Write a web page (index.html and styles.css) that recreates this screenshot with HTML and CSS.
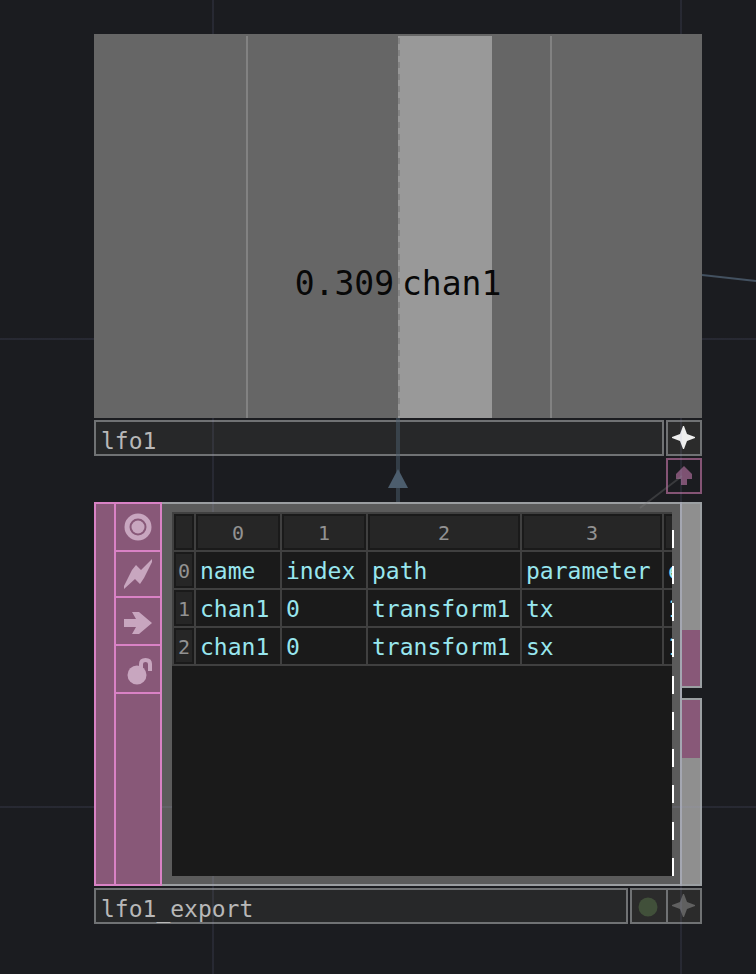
FILE: index.html
```html
<!DOCTYPE html>
<html lang="en">
<head>
<meta charset="utf-8">
<title>Network editor</title>
<link rel="stylesheet" href="styles.css">
</head>
<body>
<main class="network">
  <svg class="wire wire-out" viewBox="0 0 54 8" preserveAspectRatio="none" aria-hidden="true"><path d="M0 1 54 7"/></svg>
  <section class="node">
    <div class="channel-view">
      <div class="channel-bar"></div>
      <div class="channel-label"><span class="channel-value">0.309</span><span class="channel-name">chan1</span></div>
    </div>
    <footer class="node-bar">
      <div class="node-name">lfo1</div>
      <button class="flag" aria-label="Activate viewer"><svg viewBox="0 0 32 32"><path fill="#eee" d="m16 4 3 8 8 3v1l-8 3-3 8h-1l-3-8-8-3v-1l8-3 3-8Z"/></svg></button>
    </footer>
  </section>
  <div class="link-row">
    <svg class="wire-in" viewBox="0 0 20 84" aria-hidden="true"><path d="M8 0h4v84H8z" fill="#4c5d6d" opacity=".5"/><path d="M10 51 20 70H0z" fill="#4c5d6d"/></svg>
    <svg class="dock-line" viewBox="0 0 46 36" aria-hidden="true"><path d="M2 34 44 2"/></svg>
    <button class="flag dock" aria-label="Docked operator"><svg viewBox="0 0 32 32"><path fill="#7d5272" d="m16 6 8 8v5h-5v6h-6v-6H8v-5Z"/></svg></button>
  </div>
  <section class="node">
    <div class="dat-body">
      <div class="connector-in"></div>
      <nav class="flags">
        <button aria-label="Viewer"><svg viewBox="0 0 32 32"><circle cx="16" cy="16" r="11" fill="none" stroke="#c8a6bf" stroke-width="5"/><circle cx="16" cy="16" r="6.500" fill="#c8a6bf"/></svg></button>
        <button class="short" aria-label="Bypass"><svg viewBox="0 0 32 32"><path fill="#c8a6bf" d="M2 31V28L10 12l4-5 5 5L30 1v3l-8 16-4 6-5-5Z"/></svg></button>
        <button aria-label="Export"><svg viewBox="0 0 32 32"><path fill="#c8a6bf" d="M2 14h12l-4-7h7l13 11-13 11h-7l4-7H2Z"/></svg></button>
        <button aria-label="Lock"><svg viewBox="0 0 32 32"><circle cx="15" cy="22" r="9.500" fill="#c8a6bf"/><path d="M19 16v-5q0-4 4.500-4t4.500 4v7" fill="none" stroke="#c8a6bf" stroke-width="4"/></svg></button>
      </nav>
      <div class="frame">
        <div class="table-view">
          <table>
            <thead><tr><th class="index"></th><th class="c0">0</th><th class="c1">1</th><th class="c2">2</th><th class="c3">3</th><th class="c4"></th></tr></thead>
            <tbody>
              <tr><th class="index">0</th><td>name</td><td>index</td><td>path</td><td>parameter</td><td>enable</td></tr>
              <tr><th class="index">1</th><td>chan1</td><td>0</td><td>transform1</td><td>tx</td><td>1</td></tr>
              <tr><th class="index">2</th><td>chan1</td><td>0</td><td>transform1</td><td>sx</td><td>1</td></tr>
            </tbody>
          </table>
        </div>
        <div class="more"><i></i><i></i><i></i><i></i><i></i><i></i><i></i><i></i><i></i><i></i></div>
      </div>
      <div class="connectors">
        <div class="connector top"></div>
        <div class="connector bottom"></div>
      </div>
    </div>
    <footer class="node-bar">
      <div class="node-name">lfo1_export</div>
      <div class="flag-pair">
        <button class="flag" aria-label="Viewer state"><svg viewBox="0 0 32 32"><circle cx="16" cy="17" r="9.500" fill="#41503a"/></svg></button>
        <button class="flag" aria-label="Activate table viewer"><svg viewBox="0 0 32 32"><path fill="#606060" d="m16 4 3 8 8 3v1l-8 3-3 8h-1l-3-8-8-3v-1l8-3 3-8Z"/></svg></button>
      </div>
    </footer>
  </section>
</main>
</body>
</html>
```
FILE: styles.css
```css
* { box-sizing: border-box; }
body {
  margin: 0;
  background: #1b1c20;
  font-family: "DejaVu Sans Mono", monospace;
}
.network {
  position: relative;
  min-height: 100vh;
  padding: 34px 54px 50px 94px;
}
/* canvas grid, drawn lightly over the node frames */
.network::after {
  content: "";
  position: absolute;
  inset: 0;
  z-index: 1;
  pointer-events: none;
  background:
    linear-gradient(90deg, rgba(150, 155, 210, .1) 2px, transparent 2px) 212px 0 / 468px 468px,
    linear-gradient(rgba(150, 155, 210, .1) 2px, transparent 2px) 0 338px / 468px 468px;
}
button { margin: 0; padding: 0; border: 0; background: none; font: inherit; }
svg { display: block; }
.wire-out {
  position: absolute;
  top: 274px;
  right: 0;
  width: 54px;
  height: 8px;
}
.wire-out path { fill: none; stroke: #435160; stroke-width: 2; }
.channel-view {
  position: relative;
  z-index: 2;
  height: 384px;
  padding-top: 2px;
  background:
    linear-gradient(#828282, #828282) 152px 2px / 2px 100% no-repeat,
    linear-gradient(#828282, #828282) 456px 2px / 2px 100% no-repeat,
    #666;
}
.channel-bar {
  width: 94px;
  height: 100%;
  margin-left: 50%;
  background:
    repeating-linear-gradient(#999 0 6px, #858585 6px 12px) 0 -4px / 2px 110% no-repeat,
    #999;
}
.channel-label {
  position: absolute;
  inset: 230px 0 auto;
  display: grid;
  grid-template-columns: 1fr 1fr;
  gap: 8px;
  color: #080808;
  font-size: 33px;
  line-height: 40px;
}
.channel-value { text-align: right; }
.node-bar { display: flex; gap: 2px; margin-top: 2px; }
.node-name {
  flex: 1;
  height: 36px;
  padding: 2px 5px;
  border: 2px solid #707274;
  background: #272829;
  color: #b8b8b8;
  font-size: 23px;
  line-height: 34px;
}
.flag {
  width: 36px;
  height: 36px;
  border: 2px solid #707274;
  background: #2b2b2b;
}
.flag svg { width: 32px; height: 32px; }
.flag-pair { display: flex; }
.flag-pair .flag:first-child { border-right: 0; }
.link-row {
  position: relative;
  display: flex;
  justify-content: flex-end;
  height: 46px;
  padding-top: 2px;
}
.dock { border-color: #855475; background: none; }
.wire-in {
  position: absolute;
  left: 50%;
  bottom: 0;
  width: 20px;
  height: 84px;
  margin-left: -10px;
}
.dock-line {
  position: absolute;
  right: 18px;
  bottom: -8px;
  z-index: 1;
  width: 46px;
  height: 36px;
}
.dock-line path { stroke: rgba(130, 130, 130, .3); stroke-width: 2; }
.dat-body { display: flex; height: 384px; }
.connector-in,
.flags {
  position: relative;
  z-index: 2;
  border: 2px solid #d982c5;
  background: #885878;
}
.connector-in { width: 20px; border-right: 0; }
.flags { width: 48px; }
.flags button {
  display: grid;
  place-items: center;
  width: 100%;
  height: 48px;
  border-bottom: 2px solid #d982c5;
}
.flags .short { height: 46px; }
.flags svg { width: 32px; height: 32px; }
.frame {
  position: relative;
  flex: 1;
  min-width: 0;
  padding: 8px 8px 8px 10px;
  border: solid #9b9ea1;
  border-width: 2px 0;
  background: #5b5b5b;
}
.table-view {
  position: relative;
  z-index: 2;
  height: 100%;
  overflow: hidden;
  background: #1a1a1a;
}
table {
  width: 600px;
  table-layout: fixed;
  border-spacing: 0;
  border-top: 2px solid #404040;
  border-left: 2px solid #404040;
}
th, td {
  height: 38px;
  padding: 2px 0 0 4px;
  border: solid #404040;
  border-width: 0 2px 2px 0;
  overflow: hidden;
  color: #98e6ee;
  font-size: 23px;
  line-height: 34px;
  font-weight: 400;
  text-align: left;
  white-space: nowrap;
}
th {
  padding: 2px 0 0;
  box-shadow: inset 0 0 0 2px #1a1a1a;
  background: #262626;
  color: #929292;
  font-size: 20px;
  text-align: center;
}
.index { width: 22px; }
.c0, .c1 { width: 86px; }
.c2 { width: 154px; }
.c3 { width: 142px; }
.more {
  position: absolute;
  right: 6px;
  bottom: 8px;
  z-index: 2;
  display: flex;
  flex-direction: column;
  justify-content: space-between;
  width: 2px;
  height: 346px;
}
.more i { height: 18px; background: #fff; }
.connectors {
  display: flex;
  flex-direction: column;
  justify-content: space-between;
  width: 22px;
  border-left: 2px solid #a6a8ae;
}
.connector {
  border: 2px solid #9b9fa2;
  border-left: 0;
}
.top { height: 186px; background: linear-gradient(#8f8f8f 126px, #885878 126px); }
.bottom { height: 188px; background: linear-gradient(#885878 58px, #8f8f8f 58px); }
```
